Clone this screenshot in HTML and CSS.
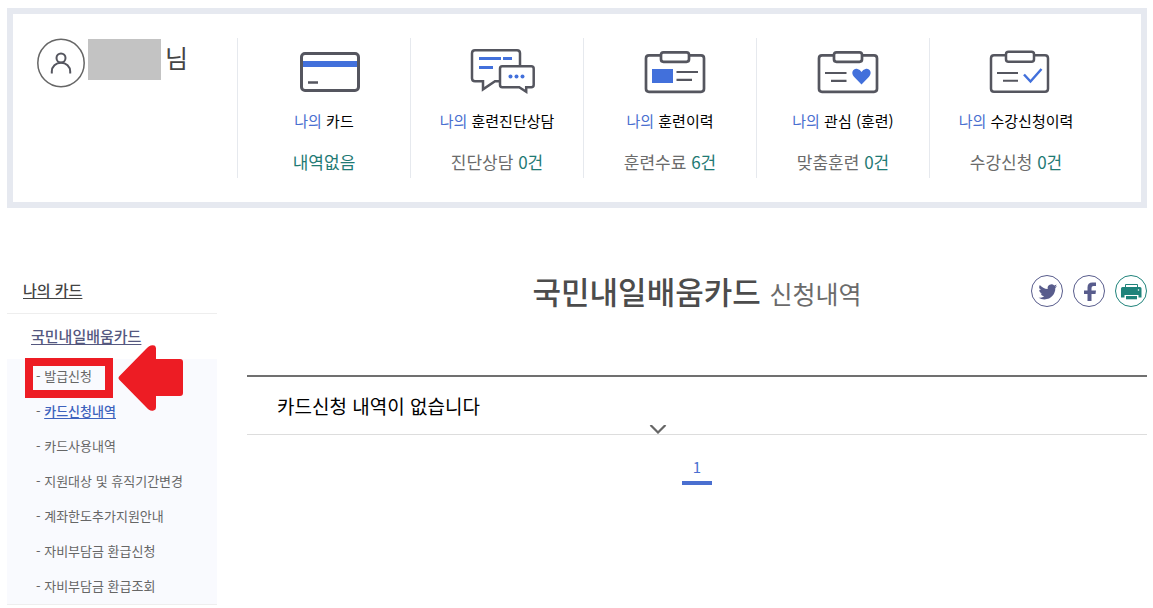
FILE: index.html
```html
<!DOCTYPE html>
<html lang="ko">
<head>
<meta charset="utf-8">
<title>국민내일배움카드 신청내역</title>
<link rel="stylesheet" href="styles.css">
</head>
<body>
<header class="summary">
  <div class="user">
    <svg class="avatar" width="48" height="50" viewBox="0 0 48 50" fill="none" aria-hidden="true">
      <ellipse cx="24" cy="25" rx="23.2" ry="23.7" stroke="#666" stroke-width="1.5"/>
      <circle cx="24" cy="20" r="4.500" stroke="#55565f" stroke-width="2"/>
      <path d="M14.800 35.500v-2c0-5 4-8.800 9.200-8.800s9.200 3.800 9.200 8.800v2" stroke="#55565f" stroke-width="2"/>
    </svg>
    <span class="user-name"></span>
    <span class="user-suffix">님</span>
  </div>
  <ul class="stats">
    <li class="stat">
      <svg class="stat-icon" width="76" height="68" viewBox="0 0 76 68" fill="none" stroke="#55565f" stroke-width="3" aria-hidden="true">
        <path d="M15 26h58" stroke="#4270db" stroke-width="6"/>
        <rect x="15.500" y="15.500" width="57" height="37" rx="3.500"/>
        <path d="M22 44.500h10" stroke-width="2.500"/>
      </svg>
      <a class="stat-label" href="#"><em>나의</em> 카드</a>
      <p class="stat-value"><strong>내역없음</strong></p>
    </li>
    <li class="stat">
      <svg class="stat-icon" width="76" height="68" viewBox="0 0 76 68" fill="none" stroke="#55565f" stroke-width="2.500" aria-hidden="true">
        <path d="M40 43.300h-4l-12 8v-8h-8q-3 0-3-3V15.200q0-3 3-3h42q3 0 3 3V28"/>
        <path d="M20 20.500h22M44 20.500h9M20 29.500h14" stroke="#4270db" stroke-width="3"/>
        <path d="M43.200 28.200h29q2.500 0 2.500 2.500v16q0 2.500-2.500 2.500h-5v4.500l-7-4.500h-17q-2.200 0-2.200-2.500v-16q0-2.500 2.200-2.500z"/>
        <g fill="#4270db" stroke="none"><circle cx="51.500" cy="38.500" r="2"/><circle cx="57.500" cy="38.500" r="2"/><circle cx="63.500" cy="38.500" r="2"/></g>
      </svg>
      <a class="stat-label" href="#"><em>나의</em> 훈련진단상담</a>
      <p class="stat-value">진단상담 <strong>0건</strong></p>
    </li>
    <li class="stat">
      <svg class="stat-icon" width="76" height="68" viewBox="0 0 76 68" fill="none" stroke="#55565f" stroke-width="2.700" aria-hidden="true">
        <path d="M29 17.300H17q-3 0-3 3v30.500q0 3 3 3h52q3 0 3-3V20.300q0-3-3-3H58"/>
        <rect x="29" y="14.300" width="28" height="9.500" rx="2.500"/>
        <path d="M20 31h21v14H20z" fill="#4270db" stroke="none"/>
        <path d="M44.500 34h21.500M44.500 41.800h15.500" stroke-width="2.200"/>
      </svg>
      <a class="stat-label" href="#"><em>나의</em> 훈련이력</a>
      <p class="stat-value">훈련수료 <strong>6건</strong></p>
    </li>
    <li class="stat">
      <svg class="stat-icon" width="76" height="68" viewBox="0 0 76 68" fill="none" stroke="#55565f" stroke-width="2.700" aria-hidden="true">
        <path d="M29 17.300H17q-3 0-3 3v30.500q0 3 3 3h52q3 0 3-3V20.300q0-3-3-3H58"/>
        <rect x="29" y="14.300" width="28" height="9.500" rx="2.500"/>
        <path d="M20 35h21.500M26 42.800h15.500" stroke-width="2.200"/>
        <path d="M56.500 46.500l-7.500-7.800c-4-4.500 0-9 3.500-7.700q2.500.500 4 3 1.500-2.500 4-3c3.500-1.300 7.500 3.200 3.500 7.700z" fill="#4270db" stroke="none"/>
      </svg>
      <a class="stat-label" href="#"><em>나의</em> 관심 (훈련)</a>
      <p class="stat-value">맞춤훈련 <strong>0건</strong></p>
    </li>
    <li class="stat">
      <svg class="stat-icon" width="76" height="68" viewBox="0 0 76 68" fill="none" stroke="#55565f" stroke-width="2.500" aria-hidden="true">
        <path d="M28 17.300H16q-3 0-3 3v30.500q0 3 3 3h51q3 0 3-3V20.300q0-3-3-3H56"/>
        <rect x="28" y="13.800" width="28" height="10" rx="2.500"/>
        <path d="M19 35h21M25 42.800h15" stroke-width="2"/>
        <path d="M46 36.500l6.500 7L63.500 31" stroke="#4270db" stroke-width="2.500"/>
      </svg>
      <a class="stat-label" href="#"><em>나의</em> 수강신청이력</a>
      <p class="stat-value">수강신청 <strong>0건</strong></p>
    </li>
  </ul>
</header>

<div class="page">
  <nav class="side" aria-label="나의 카드">
    <a class="side-title" href="#">나의 카드</a>
    <a class="side-group" href="#">국민내일배움카드</a>
    <ul class="side-list">
      <li class="marked">
        <span class="mark-box"></span>
        <svg class="mark-arrow" width="66" height="66" viewBox="0 0 66 66" fill="#ed1c24" aria-hidden="true">
          <path d="M1.500 31L28 4q4-5 8.500-3.500 1.500 1 1.500 3V14h24q3 0 3 3v31q0 3-3 3H38v11q0 3-2.500 3.500-4 1-7.500-3.500L1.500 35q-2-2 0-4z"/>
        </svg>
        <span class="side-item">- <a href="#">발급신청</a></span>
      </li>
      <li class="current">- <a href="#" aria-current="page">카드신청내역</a></li>
      <li>- <a href="#">카드사용내역</a></li>
      <li>- <a href="#">지원대상 및 휴직기간변경</a></li>
      <li>- <a href="#">계좌한도추가지원안내</a></li>
      <li>- <a href="#">자비부담금 환급신청</a></li>
      <li>- <a href="#">자비부담금 환급조회</a></li>
    </ul>
  </nav>

  <main class="main">
    <div class="heading">
      <h1 class="title">국민내일배움카드 <small>신청내역</small></h1>
      <div class="share">
        <button class="share-button" type="button" aria-label="트위터">
          <svg width="22" height="22" viewBox="-3 -3 26 26" fill="currentColor"><path transform="scale(.92)" d="M23.950 4.570a10 10 0 0 1-2.820.770 4.960 4.960 0 0 0 2.160-2.720 9.900 9.900 0 0 1-3.120 1.180 4.920 4.920 0 0 0-8.380 4.480C7.690 8.100 4.070 6.130 1.640 3.160a4.920 4.920 0 0 0 1.520 6.570 4.900 4.900 0 0 1-2.230-.610v.060a4.920 4.920 0 0 0 3.950 4.830 5 5 0 0 1-2.210.080 4.940 4.940 0 0 0 4.600 3.420A9.870 9.870 0 0 1 0 19.540a14 14 0 0 0 7.550 2.210c9.050 0 14-7.500 14-13.980 0-.210 0-.420-.020-.630a9.900 9.900 0 0 0 2.420-2.570z"/></svg>
        </button>
        <button class="share-button" type="button" aria-label="페이스북">
          <svg width="20" height="20" viewBox="0 0 20 20" fill="currentColor"><path d="M8.500 20v-7H5V9.500h3.500V6.500q0-5 5-5H17V5h-2.500q-2 0-2 2v2.500H17l-.5 3.500h-4v7z"/></svg>
        </button>
        <button class="share-button print" type="button" aria-label="인쇄">
          <svg width="22" height="20" viewBox="0 0 22 20" fill="currentColor"><path d="M5.500 6V3.500h12V6" fill="none" stroke="currentColor"/><path d="M2.500 6h17.500q1.500 0 1.500 1.500V16.500h-3V14H4.500v2.500H1V7.500Q1 6 2.500 6z"/><path d="M6 14.500h11V19H6z" fill="#fff"/><path d="M6 15h11v3.300H6z"/><circle cx="18.500" cy="9" r=".8" fill="#fff"/></svg>
        </button>
      </div>
    </div>
    <section class="history">
      <p class="empty">카드신청 내역이 없습니다</p>
      <svg class="chevron" width="18" height="9" viewBox="0 0 18 9" fill="none" stroke="#666" stroke-width="2.200" aria-hidden="true"><path d="M1.500 0L9 7.500 16.500 0"/></svg>
    </section>
    <nav class="pager" aria-label="페이지">
      <a class="pager-link" href="#" aria-current="page">1</a>
    </nav>
  </main>
</div>
</body>
</html>
```
FILE: styles.css
```css
* { box-sizing: border-box; }

body {
  margin: 8px 6px 0 7px;
  background: #fff;
  color: #000;
  font-family: "Noto Sans CJK KR", "Noto Sans", sans-serif;
  font-size: 15px;
}

ul, p, h1 { margin: 0; padding: 0; }
ul { list-style: none; }
a { color: inherit; text-decoration: none; }
svg { display: block; }

.summary {
  display: flex;
  padding: 24px 39px 24px 24px;
  border: 6px solid #e6e9f0;
}

.user {
  display: flex;
  flex: 0 0 200px;
  align-items: flex-start;
}
.user-name {
  width: 73px;
  height: 41px;
  margin: 1px 4px 0 3px;
  background: #c3c3c3;
}
.user-suffix {
  color: #444;
  font-size: 25px;
  line-height: 38px;
}

.stats {
  display: grid;
  flex: 1;
  grid-template-columns: repeat(5, 1fr);
}
.stat {
  display: flex;
  flex-direction: column;
  align-items: center;
  border-left: 1px solid #e6e9ee;
}
.stat-label {
  line-height: 30px;
}
.stat-label em {
  color: #4a6fd0;
  font-style: normal;
}
.stat-value {
  margin: 11px 0 1px;
  color: #6b6b6b;
  font-size: 17px;
  line-height: 30px;
}
.stat-value strong {
  color: #1f7a74;
  font-weight: 400;
}

.page {
  display: flex;
  gap: 30px;
  margin-top: 61px;
}

.side { flex: 0 0 210px; }
.side-title, .side-group {
  display: block;
  font-weight: 500;
  line-height: 42px;
  text-decoration: underline;
  text-underline-offset: 2px;
}
.side-title {
  padding: 0 0 2px 16px;
  border-bottom: 1px solid #eee;
  color: #444;
}
.side-group {
  padding: 1px 0 2px 24px;
  color: #55587f;
}
.side-list {
  border-bottom: 1px solid #eee;
  background: #f9fafe;
  color: #666;
  font-size: 13px;
  line-height: 33px;
}
.side-list li { padding: 0 0 2px 29px; }
.current a {
  color: #3d62bd;
  font-weight: 500;
  text-decoration: underline;
  text-underline-offset: 2px;
}

.marked, .side-item { position: relative; }
.mark-box {
  position: absolute;
  top: -1px;
  left: 18px;
  width: 88px;
  height: 40px;
  border: 8px solid #ed1c24;
}
.mark-arrow {
  position: absolute;
  top: -14px;
  left: 111px;
}

.main { flex: 1; }
.heading {
  display: grid;
  grid-template-columns: 1fr auto 1fr;
  align-items: start;
  padding-bottom: 60px;
}
.title {
  grid-column: 2;
  color: #4c4c4c;
  font-size: 31px;
  font-weight: 500;
  line-height: 44px;
}
.title small {
  color: #6b6b6b;
  font-size: 25px;
  font-weight: 400;
}
.share {
  display: flex;
  gap: 10px;
  justify-content: flex-end;
  padding-top: 6px;
}
.share-button {
  display: grid;
  width: 32px;
  height: 32px;
  padding: 0;
  border: 1px solid #585c8c;
  border-radius: 50%;
  background: #fff;
  color: #585c8c;
  place-items: center;
}
.print {
  border-color: #1f837b;
  color: #1f837b;
}

.history {
  position: relative;
  padding: 0 30px;
  border-top: 2px solid #707070;
  border-bottom: 1px solid #ddd;
}
.empty {
  font-size: 19px;
  line-height: 57px;
}
.chevron {
  position: absolute;
  bottom: 0;
  left: 44.7%;
}

.pager {
  display: flex;
  justify-content: center;
  margin-top: 18px;
}
.pager-link {
  width: 30px;
  border-bottom: 4px solid #4a6fd0;
  color: #4a6fd0;
  line-height: 28px;
  text-align: center;
}
```
